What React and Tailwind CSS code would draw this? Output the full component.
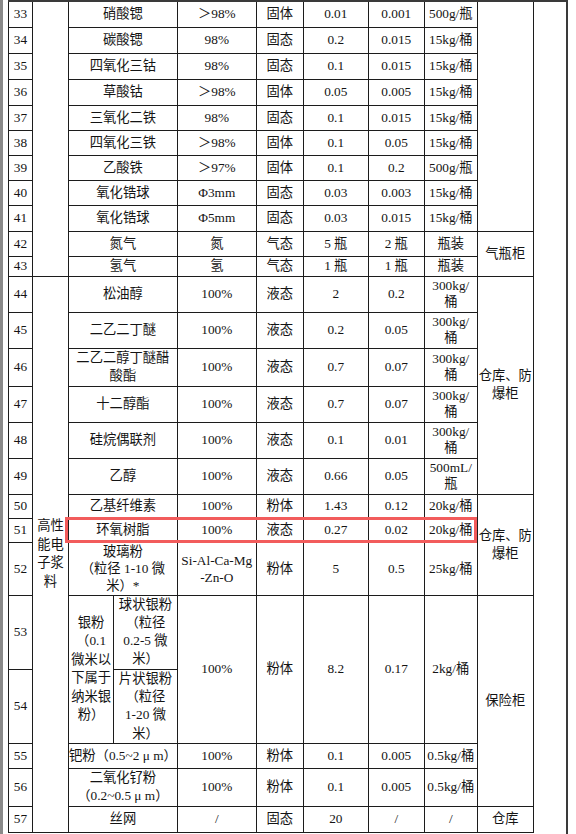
import React from "react";

const cell = "border border-[#1c1c1c] p-0 text-center align-middle";

function C({ children, className = "", ...rest }) {
  return (
    <td className={`${cell} ${className}`} {...rest}>
      {children}
    </td>);

}

const group1 = [
{ no: 34, h: "h-[26px]", name: "碳酸锶", purity: "98%", state: "固态", a: "0.2", b: "0.015", pkg: "15kg/桶" },
{ no: 35, h: "h-[26px]", name: "四氧化三钴", purity: "98%", state: "固态", a: "0.1", b: "0.015", pkg: "15kg/桶" },
{ no: 36, h: "h-[26px]", name: "草酸钴", purity: "＞98%", state: "固体", a: "0.05", b: "0.005", pkg: "15kg/桶" },
{ no: 37, h: "h-[25px]", name: "三氧化二铁", purity: "98%", state: "固态", a: "0.1", b: "0.015", pkg: "15kg/桶" },
{ no: 38, h: "h-[25px]", name: "四氧化三铁", purity: "＞98%", state: "固体", a: "0.1", b: "0.05", pkg: "15kg/桶" },
{ no: 39, h: "h-[25px]", name: "乙酸铁", purity: "＞97%", state: "固体", a: "0.1", b: "0.2", pkg: "500g/瓶" },
{ no: 40, h: "h-[25px]", name: "氧化锆球", purity: "Φ3mm", state: "固态", a: "0.03", b: "0.003", pkg: "15kg/桶" },
{ no: 41, h: "h-[26px]", name: "氧化锆球", purity: "Φ5mm", state: "固态", a: "0.03", b: "0.015", pkg: "15kg/桶" }];


const group2 = [
{ no: 45, h: "h-[36px]", name: "二乙二丁醚", a: "0.2", b: "0.05", pkg: ["300kg/", "桶"] },
{ no: 46, h: "h-[38px]", name: ["二乙二醇丁醚醋", "酸酯"], a: "0.7", b: "0.07", pkg: ["300kg/", "桶"] },
{ no: 47, h: "h-[36px]", name: "十二醇酯", a: "0.7", b: "0.07", pkg: ["300kg/", "桶"] },
{ no: 48, h: "h-[36px]", name: "硅烷偶联剂", a: "0.1", b: "0.01", pkg: ["300kg/", "桶"] },
{ no: 49, h: "h-[36px]", name: "乙醇", a: "0.66", b: "0.05", pkg: ["500mL/", "瓶"] }];


function Lines({ items, className = "" }) {
  if (!Array.isArray(items)) return items;
  return (
    <div className={className}>
      {items.map((t, i) =>
      <div key={i}>{t}</div>
      )}
    </div>);

}

function StorageText() {
  return (
    <div className="leading-[18px]">
      <div>仓库、防</div>
      <div>爆柜</div>
    </div>);

}

export default function App() {
  return (
    <div className="flex h-[834px] w-[576px] overflow-hidden bg-white text-[13.3px] text-[#141414] font-['Liberation_Serif','Noto_Sans_CJK_SC',serif]">
      <div className="w-[3px] shrink-0 bg-[#8a8a8a]" />
      <div className="relative ml-[5px] h-full w-[560px] shrink-0 border-t-2 border-r-2 border-[#3a3a3a]">
        <table className="table-fixed border-collapse leading-[18px]">
          <colgroup>
            <col className="w-[24px]" />
            <col className="w-[36px]" />
            <col className="w-[44px]" />
            <col className="w-[62px]" />
            <col className="w-[79px]" />
            <col className="w-[47px]" />
            <col className="w-[65px]" />
            <col className="w-[56px]" />
            <col className="w-[53px]" />
            <col className="w-[56px]" />
          </colgroup>
          <tbody>
            <tr className="h-[25px]">
              <C className="border-t-0">33</C>
              <C className="border-t-0" rowSpan={11} />
              <C className="border-t-0" colSpan={2}>硝酸锶</C>
              <C className="border-t-0">＞98%</C>
              <C className="border-t-0">固体</C>
              <C className="border-t-0">0.01</C>
              <C className="border-t-0">0.001</C>
              <C className="border-t-0 whitespace-nowrap">500g/瓶</C>
              <C className="border-t-0" rowSpan={9} />
            </tr>
            {group1.map((r) =>
            <tr key={r.no} className={r.h}>
                <C>{r.no}</C>
                <C colSpan={2}>{r.name}</C>
                <C>{r.purity}</C>
                <C>{r.state}</C>
                <C>{r.a}</C>
                <C>{r.b}</C>
                <C className="whitespace-nowrap">{r.pkg}</C>
              </tr>
            )}
            <tr className="h-[25px]">
              <C>42</C>
              <C colSpan={2}>氮气</C>
              <C>氮</C>
              <C>气态</C>
              <C>5 瓶</C>
              <C>2 瓶</C>
              <C>瓶装</C>
              <C rowSpan={2}>气瓶柜</C>
            </tr>
            <tr className="h-[20px]">
              <C>43</C>
              <C colSpan={2}>氢气</C>
              <C>氢</C>
              <C>气态</C>
              <C>1 瓶</C>
              <C>1 瓶</C>
              <C>瓶装</C>
            </tr>
            <tr className="h-[36px]">
              <C>44</C>
              <C rowSpan={14}>
                <div className="leading-[18.5px]">
                  <div>高性</div>
                  <div>能电</div>
                  <div>子浆</div>
                  <div>料</div>
                </div>
              </C>
              <C colSpan={2}>松油醇</C>
              <C>100%</C>
              <C>液态</C>
              <C>2</C>
              <C>0.2</C>
              <C>
                <Lines items={["300kg/", "桶"]} className="leading-[16.5px]" />
              </C>
              <C rowSpan={6}>
                <StorageText />
              </C>
            </tr>
            {group2.map((r) =>
            <tr key={r.no} className={r.h}>
                <C>{r.no}</C>
                <C colSpan={2}>
                  <Lines items={r.name} className="leading-[18.5px]" />
                </C>
                <C>100%</C>
                <C>液态</C>
                <C>{r.a}</C>
                <C>{r.b}</C>
                <C>
                  <Lines items={r.pkg} className="leading-[16.5px]" />
                </C>
              </tr>
            )}
            <tr className="h-[24px]">
              <C>50</C>
              <C colSpan={2}>乙基纤维素</C>
              <C>100%</C>
              <C>粉体</C>
              <C>1.43</C>
              <C>0.12</C>
              <C className="whitespace-nowrap">20kg/桶</C>
              <C rowSpan={3}>
                <StorageText />
              </C>
            </tr>
            <tr className="h-[24px]">
              <C>51</C>
              <C colSpan={2}>环氧树脂</C>
              <C>100%</C>
              <C>液态</C>
              <C>0.27</C>
              <C>0.02</C>
              <C className="whitespace-nowrap">20kg/桶</C>
            </tr>
            <tr className="h-[53px]">
              <C>52</C>
              <C colSpan={2}>
                <Lines items={["玻璃粉", "（粒径 1-10 微", "米）*"]} className="leading-[17px] whitespace-nowrap" />
              </C>
              <C>
                <Lines items={["Si-Al-Ca-Mg", "-Zn-O"]} className="leading-[17px] whitespace-nowrap" />
              </C>
              <C>粉体</C>
              <C>5</C>
              <C>0.5</C>
              <C className="whitespace-nowrap">25kg/桶</C>
            </tr>
            <tr className="h-[74px]">
              <C>53</C>
              <C rowSpan={2}>
                <Lines items={["银粉", "（0.1", "微米以", "下属于", "纳米银", "粉）"]} className="leading-[18.5px] whitespace-nowrap" />
              </C>
              <C>
                <Lines items={["球状银粉", "（粒径", "0.2-5 微", "米）"]} className="leading-[18.3px] whitespace-nowrap" />
              </C>
              <C rowSpan={2}>100%</C>
              <C rowSpan={2}>粉体</C>
              <C rowSpan={2}>8.2</C>
              <C rowSpan={2}>0.17</C>
              <C rowSpan={2} className="whitespace-nowrap">2kg/桶</C>
              <C rowSpan={4}>保险柜</C>
            </tr>
            <tr className="h-[74px]">
              <C>54</C>
              <C>
                <Lines items={["片状银粉", "（粒径", "1-20 微", "米）"]} className="leading-[18.3px] whitespace-nowrap" />
              </C>
            </tr>
            <tr className="h-[25px]">
              <C>55</C>
              <C colSpan={2} className="whitespace-nowrap">钯粉（0.5~2 μ m）</C>
              <C>100%</C>
              <C>粉体</C>
              <C>0.1</C>
              <C>0.005</C>
              <C className="whitespace-nowrap">0.5kg/桶</C>
            </tr>
            <tr className="h-[38px]">
              <C>56</C>
              <C colSpan={2}>
                <Lines items={["二氧化钌粉", "（0.2~0.5 μ m）"]} className="leading-[18px] whitespace-nowrap" />
              </C>
              <C>100%</C>
              <C>粉体</C>
              <C>0.1</C>
              <C>0.005</C>
              <C className="whitespace-nowrap">0.5kg/桶</C>
            </tr>
            <tr className="h-[26px]">
              <C>57</C>
              <C colSpan={2}>丝网</C>
              <C>/</C>
              <C>固态</C>
              <C>20</C>
              <C>/</C>
              <C>/</C>
              <C>仓库</C>
            </tr>
          </tbody>
        </table>

        <div className="pointer-events-none absolute left-[57px] top-[515px] h-[26px] w-[412px] border-[3px] border-[#f25c5c]" />
      </div>
    </div>);

}
